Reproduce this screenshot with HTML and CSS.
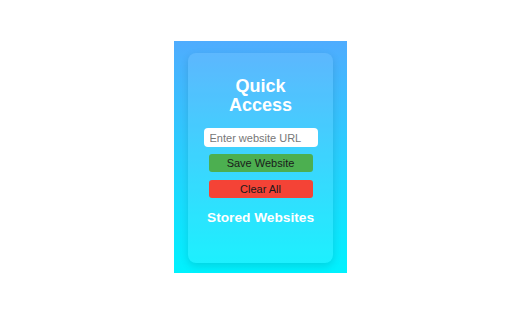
FILE: index.html
```html
<!DOCTYPE html>
<html>
<head>
<meta charset="utf-8">
<link rel="stylesheet" href="styles.css">
</head>
<body>
<div class="stage">
  <div class="popup">
    <div class="card">
      <h1 class="title">Quick Access</h1>
      <input class="url" type="text" placeholder="Enter website URL">
      <button class="btn save">Save Website</button>
      <button class="btn clear">Clear All</button>
      <h2 class="stored">Stored Websites</h2>
    </div>
  </div>
</div>
</body>
</html>
```
FILE: styles.css
```css
html, body {
  margin: 0;
  padding: 0;
  background: #ffffff;
  font-family: "Liberation Sans", Arial, sans-serif;
}
.stage {
  width: 512px;
  height: 320px;
  padding: 41px 0 0 174px;
  box-sizing: border-box;
}
.popup {
  width: 173px;
  height: 232px;
  background: linear-gradient(to bottom, #4facfe, #00f2fe);
  padding: 12px 14px 10px 14px;
  box-sizing: border-box;
}
.card {
  height: 210px;
  background: rgba(255, 255, 255, 0.1);
  border-radius: 8px;
  box-shadow: 0 3px 8px rgba(0, 0, 0, 0.12);
  display: flex;
  flex-direction: column;
  align-items: center;
  padding-top: 24px;
  box-sizing: border-box;
}
.title {
  margin: 0;
  width: 90px;
  font-size: 18px;
  line-height: 19px;
  font-weight: bold;
  color: #ffffff;
  text-align: center;
}
.url {
  margin-top: 13px;
  width: 114px;
  height: 19px;
  box-sizing: border-box;
  border: none;
  border-radius: 4px;
  background: #ffffff;
  padding: 0 6px;
  font-family: "Liberation Sans", Arial, sans-serif;
  font-size: 11px;
  color: #333;
  outline: none;
}
.url::placeholder {
  color: #777;
}
.btn {
  width: 104px;
  height: 18px;
  border: none;
  border-radius: 3px;
  padding: 0;
  font-family: "Liberation Sans", Arial, sans-serif;
  font-size: 11px;
  color: #1a1a1a;
}
.save {
  margin-top: 7px;
  background: #4caf50;
}
.clear {
  margin-top: 8px;
  background: #f44336;
}
.stored {
  margin: 12px 0 0 0;
  font-size: 13.7px;
  font-weight: bold;
  color: #ffffff;
  text-align: center;
}
```
